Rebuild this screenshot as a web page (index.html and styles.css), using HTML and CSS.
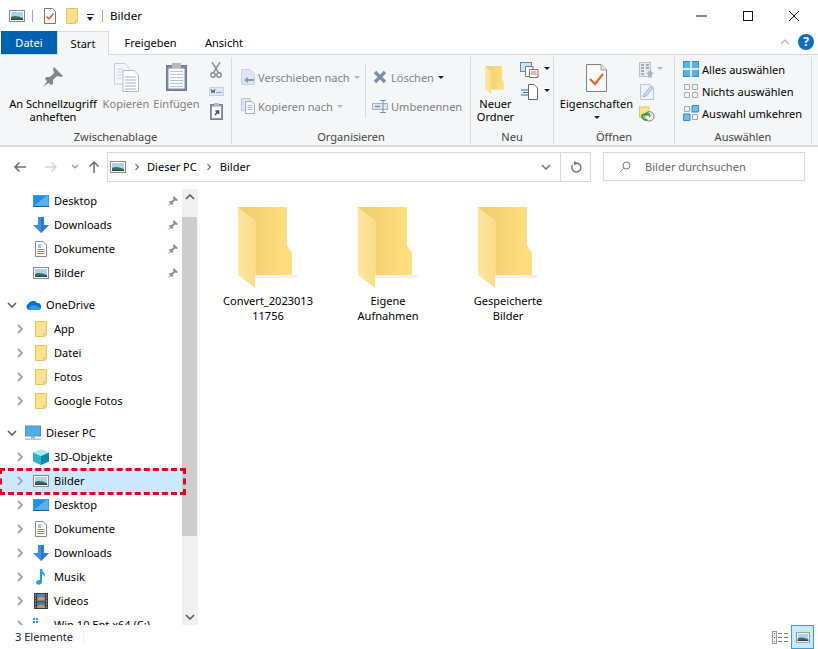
FILE: index.html
```html
<!DOCTYPE html>
<html lang="de">
<head>
<meta charset="utf-8">
<title>Bilder</title>
<link rel="stylesheet" href="styles.css">
</head>
<body>
<svg class="defs" width="0" height="0">
  <defs>
    <linearGradient id="gb" x1="0" x2="1" y1="0" y2="0"><stop offset="0" stop-color="#eecb6d"/><stop offset="1" stop-color="#ffe07f"/></linearGradient>
    <linearGradient id="gf" x1="0" x2="1" y1="0" y2="0"><stop offset="0" stop-color="#fde7a6"/><stop offset="1" stop-color="#fbdc85"/></linearGradient>
    <symbol id="bigfolder" viewBox="0 0 60 84">
      <path d="M18 68H58L60 70 58 71H18Z" fill="#efefef"/>
      <path d="M0 0H49V39L54 46V68H18Z" fill="url(#gb)"/>
      <path d="M0 0L18 14V56L17 81L0 68Z" fill="url(#gf)"/>
    </symbol>
    <symbol id="pic" viewBox="0 0 16 12">
      <rect x=".5" y=".5" width="15" height="11" fill="#fff" stroke="#8a8a8a"/>
      <rect x="2" y="2" width="12" height="8" fill="#a8d4f0"/>
      <path d="M2 7C5 5 9 6 14 8V10H2Z" fill="#3f6a58"/>
      <path d="M2 9H14V10H2Z" fill="#22404a"/>
    </symbol>
    <symbol id="folder" viewBox="0 0 12 16">
      <path d="M.5.5H11.5V13L9.5 15.5H.5Z" fill="#ffe28e" stroke="#e8c355"/>
      <path d="M9 15V13H11.5" fill="none" stroke="#e8c355"/>
    </symbol>
    <symbol id="checkdoc" viewBox="0 0 12 16">
      <path d="M.5.5H8.5L11.5 3.5V15.5H.5Z" fill="#fff" stroke="#777"/>
      <path d="M2.5 8.5L5 11L9.5 5.5" fill="none" stroke="#e0562a" stroke-width="1.5"/>
    </symbol>
    <symbol id="pinbig" viewBox="0 0 22 22">
      <path d="M12 1L21 10L19 11L15 10L11 14L11 18L9 19L3 13L4 11L8 11L12 7L11 3Z" fill="#7d8890"/>
      <path d="M6 14L1 21L8 16Z" fill="#7d8890"/>
    </symbol>
    <symbol id="copydoc" viewBox="0 0 25 29">
      <path d="M.5.5H11L15 4.5V21H.5Z" fill="#f5f7fb" stroke="#c3cfe0"/>
      <path d="M9 7.5H20L24.5 12V28.5H9Z" fill="#fff" stroke="#a9bad2"/>
      <path d="M11 14H22M11 17H22M11 20H22M11 23H22M11 26H22" stroke="#9fb0cc"/>
      <path d="M3 6H9M3 9H9M3 12H8M3 15H8" stroke="#c9d4e4"/>
    </symbol>
    <symbol id="clip" viewBox="0 0 21 29">
      <rect x=".5" y="3.5" width="20" height="25" fill="#7c8aa6" stroke="#6c7a94"/>
      <rect x="2.5" y="6.5" width="16" height="20" fill="#fff"/>
      <path d="M4 9.500H17M4 12.500H17M4 15.500H17M4 18.500H17M4 21.500H17M4 24.500H17" stroke="#b7c3da"/>
      <rect x="6" y="1" width="9" height="5" fill="#b5bac2"/>
    </symbol>
    <symbol id="scissors" viewBox="0 0 12 16">
      <path d="M2 0L8 10M10 0L4 10" stroke="#8a939d" stroke-width="1.500" fill="none"/>
      <circle cx="3" cy="13" r="2.200" fill="none" stroke="#7e8792" stroke-width="1.400"/>
      <circle cx="9" cy="13" r="2.200" fill="none" stroke="#7e8792" stroke-width="1.400"/>
    </symbol>
    <symbol id="pathbtn" viewBox="0 0 15 9">
      <rect x=".5" y=".5" width="14" height="8" fill="#d9e7f7" stroke="#c3d3e6"/>
      <path d="M2 2L3 6L4 3L5 6L6 2M8 6V5M10 6V5M12 6V5" stroke="#5b6a80" fill="none"/>
    </symbol>
    <symbol id="pastelink" viewBox="0 0 13 17">
      <rect x=".5" y="1.500" width="12" height="15" fill="#8c99b2" stroke="#75839c"/>
      <rect x="2" y="3.500" width="9" height="11.500" fill="#f7f9fc"/>
      <path d="M5 12L8 8.500M5.500 8H8.500V11" stroke="#35507c" stroke-width="1.500" fill="none"/>
      <rect x="4" y="0" width="5" height="3" fill="#b5bac2"/>
    </symbol>
    <symbol id="move" viewBox="0 0 14 16">
      <path d="M.5.5H9L13.500 5V15.500H.5Z" fill="#dde6f2" stroke="#c8d4e4"/>
      <path d="M13 10H7V8L3 11L7 14V12H13Z" fill="#8a9bb0"/>
    </symbol>
    <symbol id="copyto" viewBox="0 0 14 16">
      <path d="M.5.5H9V12.500H.5Z" fill="#dde6f2" stroke="#b9c8da"/>
      <path d="M4.500 3.500H11L13.500 6V15.500H4.500Z" fill="#f4f7fb" stroke="#9cadc4"/>
      <path d="M6.500 7.500H11.500M6.500 9.500H11.500M6.500 11.500H11.500" stroke="#a9b8cc"/>
    </symbol>
    <symbol id="xicon" viewBox="0 0 14 14">
      <path d="M2 2L12 12M12 2L2 12" stroke="#7e8ea3" stroke-width="3.400" fill="none"/>
    </symbol>
    <symbol id="rename" viewBox="0 0 16 13">
      <rect x=".5" y="3.500" width="15" height="6" fill="#dbe5f1" stroke="#a3b2c6"/>
      <path d="M3 6.500H8" stroke="#7f90a6" stroke-width="1.500"/>
      <path d="M8 .5H14M11 .5V12.500M8 12.500H14" stroke="#7f90a6" fill="none"/>
    </symbol>
    <symbol id="newitem" viewBox="0 0 25 16">
      <rect x=".5" y=".5" width="11" height="9" fill="#cfe3f5" stroke="#4f8fc4"/>
      <path d="M5.500 4.500H13V14.500H5.500Z" fill="#fff" stroke="#777"/>
      <path d="M9.500 7.500H18V15.500H9.500Z" fill="#fff" stroke="#777"/>
      <path d="M11 10H16.500M11 12H16.500" stroke="#d2705a"/>
    </symbol>
    <symbol id="quick" viewBox="0 0 25 16">
      <path d="M8.500.5H14L17.500 4V15.500H8.500Z" fill="#fff" stroke="#666"/>
      <path d="M1 6H8M3 8.500H8M1 11H8" stroke="#2e6fb5"/>
    </symbol>
    <symbol id="propdoc" viewBox="0 0 21 28">
      <path d="M.5.5H15L20.500 6V27.500H.5Z" fill="#fbfbfb" stroke="#808080"/>
      <path d="M15 .5V6H20.500" fill="#e6e6e6" stroke="#a0a0a0"/>
      <path d="M4 15L9 20L17 10" fill="none" stroke="#e9642c" stroke-width="2.200"/>
    </symbol>
    <symbol id="openlist" viewBox="0 0 16 16">
      <rect x=".5" y=".5" width="11" height="14" fill="#e4ebf5" stroke="#b4c2d6"/>
      <path d="M2 3H5M7 3H10M2 6H5M7 6H10M2 9H5M2 12H5" stroke="#8496b0" stroke-width="1.400"/>
      <path d="M11 8L15 12H13V15.500H9V12H7Z" fill="#a7b5c8"/>
    </symbol>
    <symbol id="edit" viewBox="0 0 14 16">
      <path d="M.5.5H10L13.500 4V15.500H.5Z" fill="#eef3fa" stroke="#b4c6dc"/>
      <path d="M3 13L4 10L11 2L13 4L6 12Z" fill="#cfdaea" stroke="#a0b4cc"/>
    </symbol>
    <symbol id="history" viewBox="0 0 17 16">
      <rect x=".5" y=".5" width="10" height="11" fill="#ffe28e" stroke="#e8c355"/>
      <circle cx="11" cy="10.500" r="5" fill="#f2f2f2" stroke="#777"/>
      <path d="M11 7V11L13.500 9" fill="none" stroke="#777"/>
      <path d="M2 10A4 4 0 0 1 8 8L6.500 6.500H10.500V10.500L9 9.500" fill="#3d9a3a"/>
      <path d="M3 10C4 14 7 15 9 14" stroke="#3d9a3a" stroke-width="2" fill="none"/>
    </symbol>
    <symbol id="selall" viewBox="0 0 16 16">
      <rect x=".5" y=".5" width="15" height="15" fill="#5cb0ee" stroke="#2f8fd8"/>
      <path d="M8 0V16M0 8H16" stroke="#fff" stroke-width="1.500"/>
    </symbol>
    <symbol id="selnone" viewBox="0 0 16 16">
      <path d="M1.500 1.500H6.500V6.500H1.500ZM9.500 1.500H14.500V6.500H9.500ZM1.500 9.500H6.500V14.500H1.500ZM9.500 9.500H14.500V14.500H9.500Z" fill="none" stroke="#a8a8a8"/>
    </symbol>
    <symbol id="selinv" viewBox="0 0 16 16">
      <path d="M1.500 1.500H6.500V6.500H1.500ZM9.500 9.500H14.500V14.500H9.500Z" fill="none" stroke="#a8a8a8"/>
      <path d="M9 .5H15.500V7H9ZM.5 9H7V15.500H.5Z" fill="#72bdf2" stroke="#2f8fd8"/>
    </symbol>
    <symbol id="desktop" viewBox="0 0 16 14">
      <rect x="0" y="1" width="16" height="12" fill="#2f9df0"/>
      <path d="M1 2H15V12H1Z" fill="#1e90ea"/>
      <path d="M1 12L13 2H15V12Z" fill="#55b3f5"/>
      <rect x="0" y="12" width="16" height="1" fill="#0d5c9c"/>
    </symbol>
    <symbol id="download" viewBox="0 0 16 16">
      <path d="M5 0H11V8H16L8 16L0 8H5Z" fill="#3a8fe0"/>
      <path d="M8 0H11V8H16L8 16Z" fill="#2c7bd0"/>
    </symbol>
    <symbol id="doc" viewBox="0 0 12 16">
      <path d="M.5.5H8L11.500 4V15.500H.5Z" fill="#fff" stroke="#8a8a8a"/>
      <path d="M3 4H6M3 6H6M2.500 8.500H9.500M2.500 10.500H9.500M2.500 12.500H9.500" stroke="#3f8fd2"/>
    </symbol>
    <symbol id="pin" viewBox="0 0 10 10">
      <path d="M6 0L10 4L8.500 5L7 4.500L5 6.500V8.500L4 9L1 6L1.500 5H3.500L5.500 3L5 1.500Z" fill="#8a949c"/>
      <path d="M2.500 7L0 10L3.500 8Z" fill="#8a949c"/>
    </symbol>
    <symbol id="cloud" viewBox="0 0 16 11">
      <path d="M4 10.500A3.500 3.500 0 0 1 3.500 4A5 5 0 0 1 12 3.500A3.500 3.500 0 0 1 13 10.500Z" fill="#0f6fc6"/>
      <path d="M4 10.500C3 9 4 7 6 7C8 5 11 5 12 7C15 7 16 9 15 10.500Z" fill="#2a9ce8"/>
    </symbol>
    <symbol id="pc" viewBox="0 0 16 15">
      <rect x=".5" y=".5" width="15" height="10" fill="#49b0ee" stroke="#6d8aa0"/>
      <rect x="6" y="11" width="4" height="2" fill="#9ab"/>
      <rect x="0" y="13" width="16" height="1.500" fill="#a9c6dc"/>
    </symbol>
    <symbol id="cube" viewBox="0 0 16 16">
      <path d="M8 0L16 3.500L8 7L0 3.500Z" fill="#a4ecf5"/>
      <path d="M0 3.500L8 7V16L0 12.500Z" fill="#26b5cc"/>
      <path d="M16 3.500L8 7V16L16 12.500Z" fill="#0c8ba6"/>
    </symbol>
    <symbol id="music" viewBox="0 0 12 16">
      <path d="M5 0H7C7 3 11 4 10 8C9.500 6 8 5.500 7 5V13C7 15 4.500 16 2.500 15.500C.5 15 .5 12.500 2.500 11.500C3.500 11 4.500 11 5 11.300Z" fill="#1f9df0"/>
    </symbol>
    <symbol id="film" viewBox="0 0 14 16">
      <rect width="14" height="16" fill="#3c3c3c"/>
      <rect x="3" y="1" width="8" height="6.500" fill="#4f83c8"/>
      <rect x="3" y="8.500" width="8" height="6.500" fill="#3c78c4"/>
      <path d="M3 7C5 3 8 3 11 6V7.500H3ZM3 14C5 11 8 11 11 13V15H3Z" fill="#c99b3a"/>
      <path d="M1 2H2M1 5H2M1 8H2M1 11H2M1 14H2M12 2H13M12 5H13M12 8H13M12 11H13M12 14H13" stroke="#ddd"/>
    </symbol>
    <symbol id="drive" viewBox="0 0 16 16">
      <path d="M0 1H2V3H0ZM3 1H5V3H3ZM0 4H2V6H0ZM3 4H5V6H3Z" fill="#1f9df0"/>
      <rect x="0" y="8" width="16" height="6" fill="#d2d2d2"/>
    </symbol>
    <symbol id="chev" viewBox="0 0 6 10"><path d="M1 1L5 5L1 9" fill="none" stroke="#a6a6a6" stroke-width="1.800"/></symbol>
    <symbol id="chevd" viewBox="0 0 10 6"><path d="M1 1L5 5L9 1" fill="none" stroke="#555" stroke-width="1.500"/></symbol>
  </defs>
</svg>

<div class="window">
  <header class="title">
    <svg class="i16x12"><use href="#pic"/></svg>
    <span class="tsep"></span>
    <svg class="i12x16 mr10"><use href="#checkdoc"/></svg>
    <svg class="i12x16 mr9"><use href="#folder"/></svg>
    <span class="qdrop"></span>
    <span class="tsep2"></span>
    <span class="ttext">Bilder</span>
    <div class="winbtns">
      <svg class="wb" viewBox="0 0 46 30"><path d="M17 15H28" stroke="#111"/></svg>
      <svg class="wb" viewBox="0 0 46 30"><rect x="18.500" y="10.500" width="9" height="9" fill="none" stroke="#111"/></svg>
      <svg class="wb" viewBox="0 0 46 30"><path d="M18 10L28 20M28 10L18 20" stroke="#111" fill="none"/></svg>
    </div>
  </header>

  <nav class="tabs">
    <span class="tab file">Datei</span>
    <span class="tab active">Start</span>
    <span class="tab t3">Freigeben</span>
    <span class="tab t4">Ansicht</span>
    <svg class="ribup" viewBox="0 0 10 6"><path d="M1 5L5 1L9 5" fill="none" stroke="#b5b5b5" stroke-width="1.200"/></svg>
    <span class="help">?</span>
  </nav>

  <section class="ribbon">
    <div class="group g1">
      <div class="gbody">
        <div class="big w-pin"><svg class="ic-pin"><use href="#pinbig"/></svg><span class="bl">An Schnellzugriff<br>anheften</span></div>
        <div class="big w-cop dis"><svg class="ic-cop"><use href="#copydoc"/></svg><span class="bl">Kopieren</span></div>
        <div class="big w-ein dis"><svg class="ic-clip"><use href="#clip"/></svg><span class="bl">Einfügen</span></div>
        <div class="clipcol">
          <svg class="s-sc"><use href="#scissors"/></svg>
          <svg class="s-pa"><use href="#pathbtn"/></svg>
          <svg class="s-pl"><use href="#pastelink"/></svg>
        </div>
      </div>
      <div class="glabel">Zwischenablage</div>
    </div>

    <div class="group g2">
      <div class="gbody">
        <div class="orgcol oc1">
          <div class="small dis"><svg class="i14"><use href="#move"/></svg><span>Verschieben nach</span><i class="car lt"></i></div>
          <div class="small dis"><svg class="i14"><use href="#copyto"/></svg><span>Kopieren nach</span><i class="car lt"></i></div>
        </div>
        <span class="vsep"></span>
        <div class="orgcol oc2">
          <div class="small dis"><svg class="i14x"><use href="#xicon"/></svg><span>Löschen</span><i class="car"></i></div>
          <div class="small dis"><svg class="i16r"><use href="#rename"/></svg><span>Umbenennen</span></div>
        </div>
      </div>
      <div class="glabel">Organisieren</div>
    </div>

    <div class="group g3">
      <div class="gbody">
        <div class="big w-neu"><svg class="ic-newf"><use href="#bigfolder"/></svg><span class="bl">Neuer<br>Ordner</span></div>
        <div class="newcol">
          <div class="nr"><svg class="i25"><use href="#newitem"/></svg><i class="car"></i></div>
          <div class="nr"><svg class="i25"><use href="#quick"/></svg><i class="car"></i></div>
        </div>
      </div>
      <div class="glabel">Neu</div>
    </div>

    <div class="group g4">
      <div class="gbody">
        <div class="big w-eig"><svg class="ic-prop"><use href="#propdoc"/></svg><span class="bl">Eigenschaften</span><i class="car eigcar"></i></div>
        <div class="opencol">
          <div class="nr"><svg class="i16"><use href="#openlist"/></svg><i class="car lt"></i></div>
          <svg class="i16"><use href="#edit"/></svg>
          <svg class="i16"><use href="#history"/></svg>
        </div>
      </div>
      <div class="glabel">Öffnen</div>
    </div>

    <div class="group g5">
      <div class="gbody selcol">
        <div class="small"><svg class="i16"><use href="#selall"/></svg><span>Alles auswählen</span></div>
        <div class="small"><svg class="i16"><use href="#selnone"/></svg><span>Nichts auswählen</span></div>
        <div class="small"><svg class="i16"><use href="#selinv"/></svg><span>Auswahl umkehren</span></div>
      </div>
      <div class="glabel">Auswählen</div>
    </div>
  </section>

  <section class="addr">
    <svg class="arrow back" viewBox="0 0 14 12"><path d="M13 6H2M6.500 1.500L2 6L6.500 10.500" fill="none" stroke="#6d6d6d" stroke-width="1.500"/></svg>
    <svg class="arrow fwd" viewBox="0 0 14 12"><path d="M1 6H12M7.500 1.500L12 6L7.500 10.500" fill="none" stroke="#d4d4d4" stroke-width="1.500"/></svg>
    <svg class="adrop" viewBox="0 0 8 5"><path d="M1 1L4 4L7 1" fill="none" stroke="#999" stroke-width="1.200"/></svg>
    <svg class="arrow up" viewBox="0 0 12 14"><path d="M6 13V2M1.500 6.500L6 2L10.500 6.500" fill="none" stroke="#6d6d6d" stroke-width="1.500"/></svg>
    <div class="abox">
      <svg class="i16x12"><use href="#pic"/></svg>
      <svg class="crumb" viewBox="0 0 6 10"><path d="M1.500 2L4.500 5L1.500 8" fill="none" stroke="#777" stroke-width="1.200"/></svg>
      <span class="ctext">Dieser PC</span>
      <svg class="crumb c2" viewBox="0 0 6 10"><path d="M1.500 2L4.500 5L1.500 8" fill="none" stroke="#777" stroke-width="1.200"/></svg>
      <span class="ctext">Bilder</span>
      <svg class="adown" viewBox="0 0 10 6"><path d="M1 1L5 5L9 1" fill="none" stroke="#777" stroke-width="1.600"/></svg>
      <span class="refresh">
        <svg class="rf" viewBox="0 0 12 12"><path d="M6.500 2A4.500 4.500 0 1 1 2.500 4.200" fill="none" stroke="#777" stroke-width="1.500"/><path d="M4 0V4.500L8 2.500Z" fill="#777"/></svg>
      </span>
    </div>
    <div class="sbox">
      <svg class="mag" viewBox="0 0 12 12"><circle cx="7.500" cy="4.500" r="3.500" fill="none" stroke="#777"/><path d="M5 7L1 11" stroke="#c08a70"/></svg>
      <span>Bilder durchsuchen</span>
    </div>
  </section>

  <main class="main">
    <aside class="nav">
      <div class="tree">
        <div class="row"><span class="tw"></span><svg class="ni"><use href="#desktop"/></svg><span class="nt">Desktop</span><svg class="pn"><use href="#pin"/></svg></div>
        <div class="row"><span class="tw"></span><svg class="ni"><use href="#download"/></svg><span class="nt">Downloads</span><svg class="pn"><use href="#pin"/></svg></div>
        <div class="row"><span class="tw"></span><svg class="ni"><use href="#doc"/></svg><span class="nt">Dokumente</span><svg class="pn"><use href="#pin"/></svg></div>
        <div class="row"><span class="tw"></span><svg class="ni"><use href="#pic"/></svg><span class="nt">Bilder</span><svg class="pn"><use href="#pin"/></svg></div>

        <div class="row root"><svg class="tg"><use href="#chevd"/></svg><svg class="ni"><use href="#cloud"/></svg><span class="nt">OneDrive</span></div>
        <div class="row"><svg class="tw"><use href="#chev"/></svg><svg class="ni"><use href="#folder"/></svg><span class="nt">App</span></div>
        <div class="row"><svg class="tw"><use href="#chev"/></svg><svg class="ni"><use href="#folder"/></svg><span class="nt">Datei</span></div>
        <div class="row"><svg class="tw"><use href="#chev"/></svg><svg class="ni"><use href="#folder"/></svg><span class="nt">Fotos</span></div>
        <div class="row"><svg class="tw"><use href="#chev"/></svg><svg class="ni"><use href="#folder"/></svg><span class="nt">Google Fotos</span></div>

        <div class="row root"><svg class="tg"><use href="#chevd"/></svg><svg class="ni"><use href="#pc"/></svg><span class="nt">Dieser PC</span></div>
        <div class="row"><svg class="tw"><use href="#chev"/></svg><svg class="ni"><use href="#cube"/></svg><span class="nt">3D-Objekte</span></div>
        <div class="row sel"><svg class="tw"><use href="#chev"/></svg><svg class="ni"><use href="#pic"/></svg><span class="nt">Bilder</span></div>
        <div class="row"><svg class="tw"><use href="#chev"/></svg><svg class="ni"><use href="#desktop"/></svg><span class="nt">Desktop</span></div>
        <div class="row"><svg class="tw"><use href="#chev"/></svg><svg class="ni"><use href="#doc"/></svg><span class="nt">Dokumente</span></div>
        <div class="row"><svg class="tw"><use href="#chev"/></svg><svg class="ni"><use href="#download"/></svg><span class="nt">Downloads</span></div>
        <div class="row"><svg class="tw"><use href="#chev"/></svg><svg class="ni"><use href="#music"/></svg><span class="nt">Musik</span></div>
        <div class="row"><svg class="tw"><use href="#chev"/></svg><svg class="ni"><use href="#film"/></svg><span class="nt">Videos</span></div>
        <div class="row"><svg class="tw"><use href="#chev"/></svg><svg class="ni"><use href="#drive"/></svg><span class="nt">Win 10 Ent x64 (C:)</span></div>
      </div>
      <div class="sbar">
        <svg class="sarrow" viewBox="0 0 10 6"><path d="M1 5L5 1L9 5" fill="none" stroke="#555" stroke-width="1.500"/></svg>
        <div class="strack"><div class="thumb"></div></div>
        <svg class="sarrow" viewBox="0 0 10 6"><path d="M1 1L5 5L9 1" fill="none" stroke="#555" stroke-width="1.500"/></svg>
      </div>
    </aside>
    <div class="content">
      <div class="item"><svg class="fld"><use href="#bigfolder"/></svg><span class="lbl">Convert_2023013<br>11756</span></div>
      <div class="item"><svg class="fld"><use href="#bigfolder"/></svg><span class="lbl">Eigene<br>Aufnahmen</span></div>
      <div class="item"><svg class="fld"><use href="#bigfolder"/></svg><span class="lbl">Gespeicherte<br>Bilder</span></div>
    </div>
  </main>

  <footer class="status">
    <span class="count">3 Elemente</span>
    <span class="ssep"></span>
    <svg class="vdet" viewBox="0 0 17 13">
      <rect x=".5" y=".5" width="4" height="12" fill="#fff" stroke="#999"/>
      <path d="M2 2.500H3M2 6.500H3" stroke="#666"/><path d="M2 10.500H3" stroke="#c33"/>
      <path d="M6 2.500H10M12 2.500H16M6 6.500H10M12 6.500H16M6 10.500H10M12 10.500H16" stroke="#777"/>
    </svg>
    <span class="vbig"><svg class="vpic"><use href="#pic"/></svg></span>
  </footer>
</div>
</body>
</html>
```
FILE: styles.css
```css
*, *::before, *::after { box-sizing: border-box; }
html, body { margin: 0; padding: 0; background: #fff; }
body { width: 818px; height: 649px; overflow: hidden; font: 11.05px/13px "Noto Sans", sans-serif; color: #000; }
.defs { position: absolute; }
svg { display: block; flex: none; }
i { display: block; }
.window { display: flex; flex-direction: column; width: 818px; height: 649px; }

/* title bar */
.title { display: flex; align-items: center; height: 31px; padding-left: 9px; flex: none; }
.i16x12 { width: 16px; height: 12px; }
.i12x16 { width: 12px; height: 16px; }
.tsep { width: 1px; height: 12px; background: #a5a5a5; margin: 0 11px 0 7px; }
.mr10 { margin-right: 10px; }
.mr9 { margin-right: 9px; }
.qdrop { width: 7px; height: 7px; border-top: 1px solid #222; position: relative; margin-top: 3px; margin-right: 8px; }
.qdrop::after { content: ""; position: absolute; left: 0; top: 2px; width: 0; height: 0; border: 3.500px solid transparent; border-top: 4px solid #222; border-bottom: 0; }
.tsep2 { width: 1px; height: 12px; background: #a5a5a5; margin-right: 7px; }
.ttext { font-size: 11.6px; }
.winbtns { display: flex; margin-left: auto; margin-right: 1px; }
.wb { width: 46px; height: 30px; }

/* tabs */
.tabs { display: flex; align-items: stretch; height: 24px; flex: none; border-bottom: 1px solid #dadbdc; padding-left: 1px; position: relative; }
.tab { display: flex; align-items: center; justify-content: center; height: 23px; }
.file { width: 56px; background: #0063b1; color: #fff; }
.active { width: 52px; height: 24px; background: #f5f6f7; border: 1px solid #dadbdc; border-bottom: 0; }
.t3 { width: 81px; margin-left: 1px; }
.t4 { width: 58px; margin-left: 4px; }
.ribup { position: absolute; left: 780px; top: 8px; width: 10px; height: 6px; }
.help { position: absolute; left: 798px; top: 3px; width: 16px; height: 16px; border-radius: 50%; background: #0d6fc0; color: #fff; font-weight: 700; font-size: 12px; line-height: 16px; text-align: center; }

/* ribbon */
.ribbon { display: flex; height: 92px; flex: none; background: #f5f6f7; border-bottom: 2px solid #dcdddf; padding-bottom: 1px; }
.group { display: flex; flex-direction: column; border-right: 1px solid #dadbdc; margin-top: 2px; }
.g1 { width: 232px; }
.g2 { width: 239px; }
.g3 { width: 83px; }
.g4 { width: 121px; }
.g5 { width: 137px; }
.gbody { flex: 1; display: flex; min-height: 0; }
.glabel { height: 15px; text-align: center; color: #444; line-height: 16px; }
.big { display: flex; flex-direction: column; align-items: center; text-align: center; }
.bl { display: block; }
.dis { color: #808080; }
.w-pin { width: 106px; }
.ic-pin { width: 22px; height: 22px; margin: 9px 0 9px; }
.w-cop { width: 38px; margin-left: 1px; }
.ic-cop { width: 25px; height: 29px; margin: 6px 0 5px; }
.w-ein { width: 51px; margin-left: 6px; }
.ic-clip { width: 21px; height: 29px; margin: 5px 0 6px; }
.clipcol { display: flex; flex-direction: column; align-items: center; width: 16px; margin-left: 6px; padding-top: 5px; }
.s-sc { width: 12px; height: 16px; margin-bottom: 9px; }
.s-pa { width: 15px; height: 9px; margin-bottom: 7px; }
.s-pl { width: 13px; height: 17px; }

.g2 .gbody { padding-left: 9px; }
.orgcol { display: flex; flex-direction: column; gap: 13px; padding-top: 12px; }
.oc1 { width: 124px; }
.small { display: flex; align-items: center; height: 16px; white-space: nowrap; }
.i14 { width: 14px; height: 16px; margin-right: 3px; }
.i14x { width: 14px; height: 14px; margin: 0 4px 0 1px; }
.i16r { width: 16px; height: 13px; margin-right: 3px; }
.car { width: 0; height: 0; border: 3px solid transparent; border-top: 3px solid #222; border-bottom: 0; margin-left: 4px; }
.car.lt { border-top-color: #b5b5b5; }
.vsep { width: 1px; height: 54px; background: #dadbdc; margin: 7px 6px 0 0; }

.w-neu { width: 49px; }
.ic-newf { width: 21px; height: 29px; margin: 9px 0 2px 0; }
.newcol { display: flex; flex-direction: column; gap: 6px; padding-top: 5px; }
.nr { display: flex; align-items: center; }
.i25 { width: 25px; height: 16px; }
.newcol .car { margin-left: -1px; margin-top: -4px; }

.w-eig { width: 85px; }
.ic-prop { width: 21px; height: 28px; margin: 7px 0 5px; }
.eigcar { margin: 6px 0 0; }
.opencol { display: flex; flex-direction: column; gap: 6px; padding-top: 5px; }
.i16 { width: 16px; height: 16px; }
.opencol .car { margin-left: 2px; margin-top: -4px; }

.selcol { flex-direction: column; gap: 6px; padding: 4px 0 0 8px; }
.selcol .i16 { margin-right: 3px; }

/* address */
.addr { display: flex; align-items: flex-start; height: 42px; flex: none; padding-top: 5px; }
.back { width: 14px; height: 12px; margin: 9px 17px 0 13px; }
.fwd { width: 14px; height: 12px; margin: 9px 0 0 0; }
.adrop { width: 8px; height: 5px; margin: 12px 0 0 13px; }
.up { width: 12px; height: 14px; margin: 8px 7px 0 9px; }
.abox { display: flex; align-items: center; width: 484px; height: 30px; border: 1px solid #d9d9d9; padding-left: 2px; }
.crumb { width: 6px; height: 10px; margin: 0 7px 0 8px; }
.c2 { margin: 0 8px 0 9px; }
.ctext { position: relative; top: -1px; }
.adown { width: 10px; height: 6px; margin-left: auto; margin-right: 9px; }
.refresh { display: flex; align-items: center; justify-content: center; width: 30px; height: 28px; border-left: 1px solid #d9d9d9; }
.rf { width: 12px; height: 12px; }
.sbox { display: flex; align-items: center; width: 202px; height: 29px; border: 1px solid #d9d9d9; margin-left: 12px; padding-left: 15px; color: #666; }
.mag { width: 12px; height: 12px; margin-right: 14px; }

/* main */
.main { display: flex; height: 436px; flex: none; }
.nav { display: flex; width: 198px; height: 436px; flex: none; overflow: hidden; border-right: 1px solid #f3f3f3; }
.tree { width: 182px; flex: none; height: 436px; position: relative; z-index: 1; }
.row { display: flex; align-items: center; height: 24px; position: relative; }
.root { margin-top: 8px; }
.tw { width: 6px; height: 10px; margin: 0 10px 0 17px; }
.row > span.tw { display: block; }
.tg { width: 10px; height: 6px; margin: 0 8px 0 7px; }
.ni { width: 16px; height: 16px; margin-right: 5px; }
.nt { white-space: nowrap; position: relative; top: -1px; }
.pn { width: 10px; height: 10px; margin-left: auto; margin-right: 4px; }
.sel { background: #cce8ff; }
.sel::after { content: ""; position: absolute; left: -1px; top: -1px; width: 187px; height: 27px; border: 3px dashed #e2001a; }
.sbar { display: flex; flex-direction: column; width: 15px; background: #f0f0f0; align-items: center; }
.sarrow { width: 10px; height: 6px; margin: 5px 0; }
.strack { flex: 1; width: 15px; padding-top: 12px; }
.thumb { height: 319px; background: #cdcdcd; }
.content { display: flex; gap: 20px; padding: 17px 0 0 20px; flex: 1; align-items: flex-start; }
.item { display: flex; flex-direction: column; align-items: center; width: 100px; }
.fld { width: 60px; height: 84px; margin: 1px 0 0 0; }
.lbl { text-align: center; margin-top: 2px; line-height: 15px; }

/* status */
.status { display: flex; align-items: center; flex: 1; position: relative; padding-left: 15px; }
.count { width: 68px; color: #222; position: relative; top: -1px; }
.ssep { width: 1px; height: 12px; background: #f0f0f0; }
.vdet { width: 17px; height: 13px; margin-left: auto; margin-right: 2px; }
.vbig { display: flex; align-items: center; justify-content: center; width: 23px; height: 24px; background: #cce8ff; border: 1px solid #3aa0d8; margin-right: 4px; }
.vpic { width: 14px; height: 11px; }
```
